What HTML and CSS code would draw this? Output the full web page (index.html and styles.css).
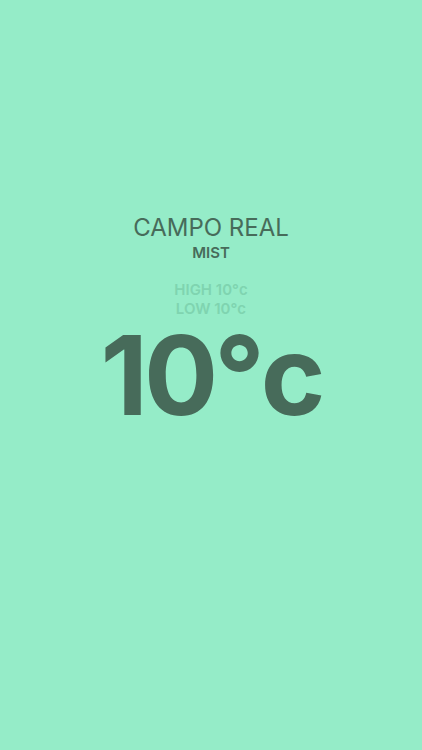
FILE: index.html
```html
<!DOCTYPE html>
<html>
<head>
<meta charset="utf-8">
<link rel="stylesheet" href="styles.css">
</head>
<body>
<main class="screen">
  <div class="weather">
    <h1 class="city">CAMPO REAL</h1>
    <p class="cond">MIST</p>
    <div class="range">
      <p class="hl">HIGH 10°c</p>
      <p class="hl">LOW 10°c</p>
    </div>
    <p class="temp">10°c</p>
  </div>
</main>
</body>
</html>
```
FILE: styles.css
```css
html, body {
  margin: 0;
  padding: 0;
  background: #95ecc8;
}
.screen {
  width: 422px;
  height: 750px;
  display: flex;
  flex-direction: column;
  align-items: center;
  font-family: Inter, "Liberation Sans", Arial, sans-serif;
  color: #476b5a;
}
.weather {
  margin-top: 213px;
  display: flex;
  flex-direction: column;
  align-items: center;
}
.city {
  margin: 0;
  font-size: 24px;
  font-weight: 400;
  line-height: 30px;
}
.cond {
  margin: 0;
  font-size: 15px;
  font-weight: 600;
  line-height: 20px;
}
.range {
  margin-top: 17px;
  display: flex;
  flex-direction: column;
  align-items: center;
}
.hl {
  margin: 0;
  font-size: 15px;
  font-weight: 600;
  line-height: 19px;
  color: #7fd4b0;
}
.temp {
  margin: 0;
  font-size: 110px;
  font-weight: 700;
  line-height: 114px;
  letter-spacing: -4px;
}
```
